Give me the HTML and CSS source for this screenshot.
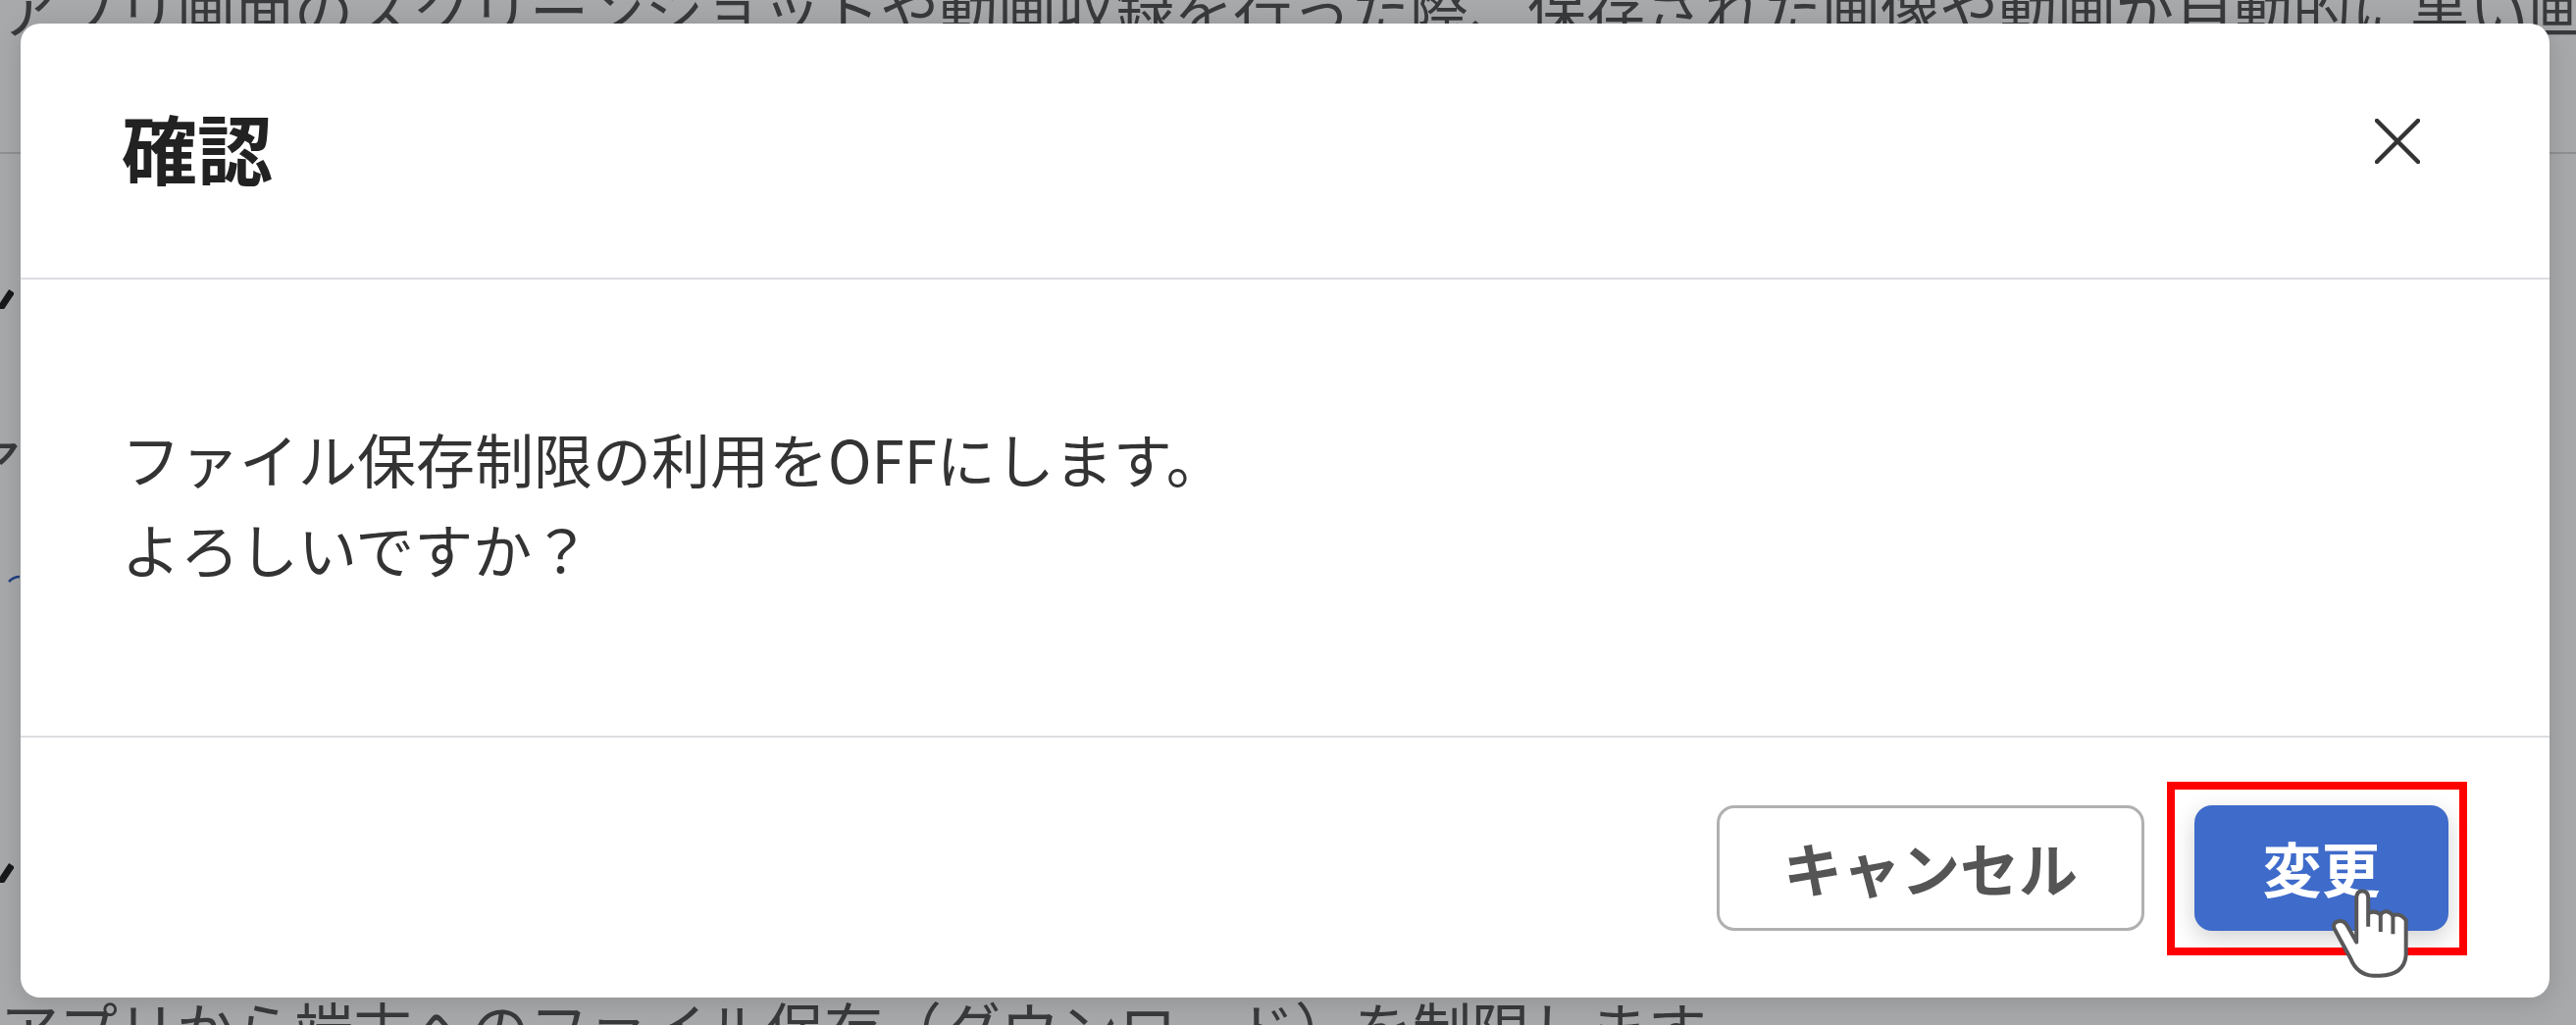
FILE: index.html
```html
<!DOCTYPE html>
<html lang="ja">
<head>
<meta charset="utf-8">
<title>確認</title>
<link rel="stylesheet" href="styles.css">
</head>
<body>
<main class="page">
  <p class="page-line page-line-top">アプリ画面のスクリーンショットや動画収録を行った際、保存された画像や動画が自動的に黒い画面になります。</p>
  <hr class="page-rule">
  <div class="page-mark page-mark-first"><svg class="page-check" viewBox="0 0 14 20"><path d="M0 20 L12 2"/></svg></div>
  <p class="page-line page-line-second">アプリから端末へのファイル転送を制限します。</p>
  <svg class="page-link" viewBox="0 0 22 10"><path d="M9 8 Q14 3 20 3"/></svg>
  <div class="page-mark page-mark-second"><svg class="page-check" viewBox="0 0 14 20"><path d="M0 20 L12 2"/></svg></div>
  <p class="page-line page-line-bottom">アプリから端末へのファイル保存（ダウンロード）を制限します。</p>
</main>
<div class="overlay"></div>
<section class="modal" role="dialog">
  <header class="modal-header">
    <h1 class="modal-title">確認</h1>
    <svg class="modal-close" viewBox="0 0 46 46"><path d="M2 2 L44 44 M44 2 L2 44"/></svg>
  </header>
  <div class="modal-body">
    <p>ファイル保存制限の利用をOFFにします。</p>
    <p>よろしいですか？</p>
  </div>
  <footer class="modal-footer">
    <button class="btn btn-cancel">キャンセル</button>
    <div class="confirm-wrap">
      <button class="btn btn-primary">変更</button>
      <span class="highlight"></span>
      <svg class="hand" viewBox="90 130 250 285">
        <path class="hand-fill" d="M178 300 L178 165 Q178 143 196 143 Q214 143 214 165 L214 212 Q232 200 252 215 Q270 195 290 218 Q312 208 330 232 L330 340 Q325 400 250 403 L230 403 Q180 400 160 350 L112 262 Q100 240 125 235 Q140 232 150 250 Z"/>
        <path class="hand-line" d="M214 212 L214 252 M252 215 L252 268 M290 218 L290 275"/>
      </svg>
    </div>
  </footer>
</section>
</body>
</html>
```
FILE: styles.css
```css
* { box-sizing: border-box; }
html, body { margin: 0; height: 100%; overflow: hidden; }
body { font-family: "Noto Sans CJK JP", "Noto Sans", sans-serif; background: #fff; }

.page { height: 1045px; overflow: hidden; display: flex; flex-direction: column; color: #555; font-size: 60px; }
.page-line { margin: 0; line-height: 80px; white-space: nowrap; flex: none; }
.page-line-top { margin-top: -32px; }
.page-rule { width: 100%; margin: 107px 0 0; border: 0; border-top: 2px solid #d8d8d8; flex: none; }
.page-mark { height: 20px; flex: none; }
.page-mark-first { margin-top: 138px; }
.page-mark-second { margin-top: 285px; }
.page-check { display: block; width: 14px; height: 20px; }
.page-check path { fill: none; stroke: #222; stroke-width: 7; }
.page-line-second { margin: 115px 0 0 -38px; }
.page-link { display: block; flex: none; width: 22px; height: 10px; margin-top: 75px; }
.page-link path { fill: none; stroke: #2f5fc0; stroke-width: 2.5; }
.page-line-bottom { margin-top: 107px; }

.overlay { position: fixed; inset: 0; background: rgba(6, 9, 15, .35); }

.modal { position: fixed; left: 21px; top: 24px; width: 2578px; height: 993px; background: #fff; border-radius: 20px; display: flex; flex-direction: column; box-shadow: 0 4px 28px rgba(0, 0, 0, .15); }
.modal-header { height: 261px; flex: none; border-bottom: 2px solid #dcdde0; display: flex; align-items: center; justify-content: space-between; padding: 0 132px 0 103px; }
.modal-title { margin: -8px 0 0; font-size: 77px; line-height: 1; font-weight: 700; color: #222; }
.modal-close { width: 46px; height: 46px; margin-top: -19px; flex: none; }
.modal-close path { fill: none; stroke: #333; stroke-width: 4.5; stroke-linecap: round; }

.modal-body { flex: 1; border-bottom: 2px solid #dcdde0; padding-top: 136px; padding-left: 103px; font-size: 60px; line-height: 92px; color: #333; }
.modal-body p { margin: 0; }

.modal-footer { height: 265px; flex: none; display: flex; justify-content: flex-end; align-items: flex-start; gap: 51px; padding: 69px 103px 0 0; }
.btn { height: 128px; border-radius: 18px; font-family: inherit; font-size: 60px; font-weight: 700; padding: 0 0 4px; }
.btn-cancel { width: 436px; background: #fff; border: 3px solid #b0b0b2; color: #555; }
.confirm-wrap { position: relative; width: 259px; height: 128px; }
.btn-primary { width: 259px; background: #3f6bca; border: 0; color: #fff; box-shadow: 0 8px 24px rgba(0, 0, 0, .18); }
.highlight { position: absolute; left: -28px; top: -24px; width: 306px; height: 177px; border: 8px solid #ff0000; }
.hand { position: absolute; left: 136px; top: 83px; width: 83px; height: 95px; overflow: visible; }
.hand-fill { fill: #fff; stroke: #58585a; stroke-width: 12; stroke-linejoin: round; }
.hand-line { fill: none; stroke: #58585a; stroke-width: 12; }
```
